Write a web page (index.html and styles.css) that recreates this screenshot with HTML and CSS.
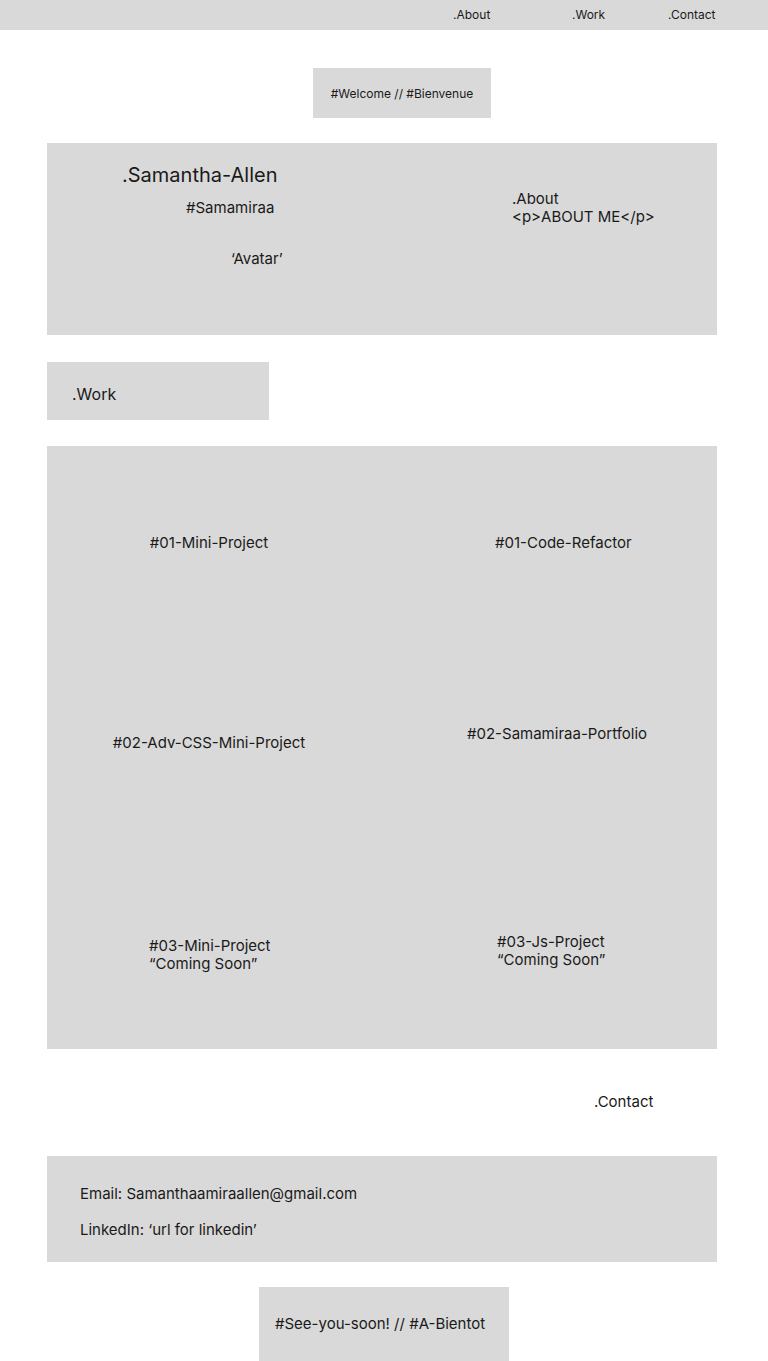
FILE: index.html
```
<!DOCTYPE html>
<html lang="en">
  <head>
    <meta name="viewport" content="width=device-width, initial-scale=1.0" />
    <link rel="stylesheet" href="styles.css">
  </head>
  <body>
    <nav class="topnav">
      <a href="#about" class="nav-about">.About</a>
      <a href="#work" class="nav-work">.Work</a>
      <a href="#contact">.Contact</a>
    </nav>

    <main class="page">
      <div class="welcome">#Welcome // #Bienvenue</div>

      <section class="hero" id="about">
        <div class="hero-left">
          <h1 class="name">.Samantha-Allen</h1>
          <p class="handle">#Samamiraa</p>
          <p class="avatar">‘Avatar’</p>
        </div>
        <div class="hero-right">
          <p>.About</p>
          <p>&lt;p&gt;ABOUT ME&lt;/p&gt;</p>
        </div>
      </section>

      <div class="work-title" id="work">.Work</div>

      <section class="projects">
        <div class="project left r1">#01-Mini-Project</div>
        <div class="project right r1 code">#01-Code-Refactor</div>
        <div class="project left r2">#02-Adv-CSS-Mini-Project</div>
        <div class="project right r2 folio">#02-Samamiraa-Portfolio</div>
        <div class="project left r3">#03-Mini-Project<br />“Coming Soon”</div>
        <div class="project right r3 js">#03-Js-Project<br />“Coming Soon”</div>
      </section>

      <div class="contact-title" id="contact">.Contact</div>

      <section class="contact">
        <p>Email: Samanthaamiraallen@gmail.com</p>
        <p>LinkedIn: ‘url for linkedin’</p>
      </section>

      <div class="bye">#See-you-soon! // #A-Bientot</div>
    </main>
  </body>
</html>
```

FILE: styles.css
```
body {
  margin: 0;
  font-family: "Inter", sans-serif;
  color: #1a1a1a;
  background: #fff;
}
p {
  margin: 0;
}
.topnav {
  height: 30px;
  box-sizing: border-box;
  padding-bottom: 2px;
  background-color: #d9d9d9;
  display: flex;
  align-items: center;
  padding-left: 453px;
  font-size: 12px;
}
.topnav a {
  color: #1a1a1a;
  text-decoration: none;
}
.nav-about {
  width: 119px;
}
.nav-work {
  width: 96px;
}
.page {
  width: 670px;
  margin-left: 47px;
}
.welcome {
  width: 178px;
  height: 50px;
  margin: 38px 0 0 266px;
  background-color: #d9d9d9;
  display: flex;
  align-items: center;
  justify-content: center;
  font-size: 12px;
}
.hero {
  margin-top: 25px;
  height: 192px;
  background-color: #d9d9d9;
  display: flex;
  font-size: 15px;
  line-height: 18px;
}
.hero-left {
  width: 465px;
  padding-top: 20px;
}
.name {
  margin: 0 0 0 75px;
  font-size: 20px;
  line-height: 24px;
  font-weight: 400;
}
.handle {
  margin: 12px 0 0 139px;
}
.avatar {
  margin: 33px 0 0 184px;
}
.hero-right {
  padding-top: 47px;
}
.work-title {
  width: 222px;
  height: 58px;
  margin-top: 27px;
  background-color: #d9d9d9;
  box-sizing: border-box;
  padding: 23px 0 0 25px;
  font-size: 16px;
  line-height: 18px;
}
.projects {
  margin-top: 26px;
  height: 603px;
  background-color: #d9d9d9;
  display: grid;
  grid-template-columns: 324px 1fr;
  grid-template-rows: 200px 200px 203px;
  font-size: 15px;
  line-height: 18px;
}
.project.left {
  text-align: center;
}
.r1 {
  padding-top: 88px;
}
.r2.left {
  padding-top: 88px;
}
.r2.right {
  padding-top: 79px;
}
.r3.left {
  padding-top: 91px;
  text-align: left;
  padding-left: 102px;
}
.r3.right {
  padding-top: 87px;
}
.code {
  padding-left: 124px;
}
.folio {
  padding-left: 96px;
}
.js {
  padding-left: 126px;
}
.contact-title {
  margin: 44px 0 0 547px;
  font-size: 15px;
  line-height: 18px;
}
.contact {
  margin-top: 45px;
  height: 106px;
  box-sizing: border-box;
  padding: 29px 0 0 33px;
  background-color: #d9d9d9;
  font-size: 15px;
  line-height: 18px;
}
.contact p + p {
  margin-top: 18px;
}
.bye {
  width: 250px;
  height: 74px;
  margin: 25px 0 0 212px;
  box-sizing: border-box;
  padding: 0 0 2px 16px;
  background-color: #d9d9d9;
  display: flex;
  align-items: center;
  font-size: 15px;
}
```
